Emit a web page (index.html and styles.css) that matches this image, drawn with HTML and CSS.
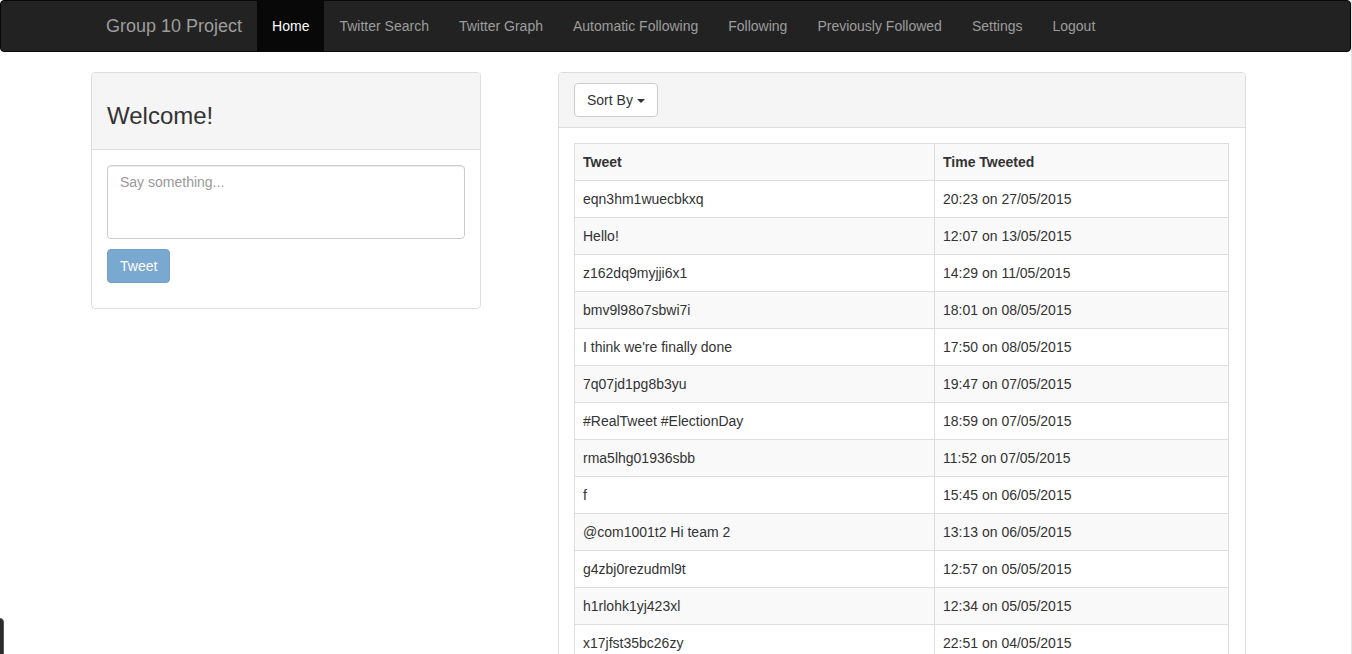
FILE: index.html
```html
<!DOCTYPE html>
<html lang="en">
<head>
<meta charset="utf-8">
<title>Group 10 Project</title>
<link rel="stylesheet" href="styles.css">
</head>
<body>
<div class="page">
  <nav class="navbar">
    <div class="nav-inner">
      <a class="brand" href="#">Group 10 Project</a>
      <ul class="nav">
        <li class="active"><a href="#">Home</a></li>
        <li><a href="#">Twitter Search</a></li>
        <li><a href="#">Twitter Graph</a></li>
        <li><a href="#">Automatic Following</a></li>
        <li><a href="#">Following</a></li>
        <li><a href="#">Previously Followed</a></li>
        <li><a href="#">Settings</a></li>
        <li><a href="#">Logout</a></li>
      </ul>
    </div>
  </nav>

  <div class="container main">
    <div class="panel panel-left">
      <div class="panel-heading">
        <h3 class="welcome">Welcome!</h3>
      </div>
      <div class="panel-body left-body">
        <textarea class="form-control" rows="3" placeholder="Say something..."></textarea>
        <button class="btn btn-primary" disabled>Tweet</button>
      </div>
    </div>

    <div class="panel panel-right">
      <div class="panel-heading">
        <button class="btn btn-default">Sort By <span class="caret"></span></button>
      </div>
      <div class="panel-body">
        <table class="table">
          <tbody>
            <tr><th class="col-tweet">Tweet</th><th>Time Tweeted</th></tr>
            <tr><td>eqn3hm1wuecbkxq</td><td>20:23 on 27/05/2015</td></tr>
            <tr><td>Hello!</td><td>12:07 on 13/05/2015</td></tr>
            <tr><td>z162dq9myjji6x1</td><td>14:29 on 11/05/2015</td></tr>
            <tr><td>bmv9l98o7sbwi7i</td><td>18:01 on 08/05/2015</td></tr>
            <tr><td>I think we're finally done</td><td>17:50 on 08/05/2015</td></tr>
            <tr><td>7q07jd1pg8b3yu</td><td>19:47 on 07/05/2015</td></tr>
            <tr><td>#RealTweet #ElectionDay</td><td>18:59 on 07/05/2015</td></tr>
            <tr><td>rma5lhg01936sbb</td><td>11:52 on 07/05/2015</td></tr>
            <tr><td>f</td><td>15:45 on 06/05/2015</td></tr>
            <tr><td>@com1001t2 Hi team 2</td><td>13:13 on 06/05/2015</td></tr>
            <tr><td>g4zbj0rezudml9t</td><td>12:57 on 05/05/2015</td></tr>
            <tr><td>h1rlohk1yj423xl</td><td>12:34 on 05/05/2015</td></tr>
            <tr><td>x17jfst35bc26zy</td><td>22:51 on 04/05/2015</td></tr>
          </tbody>
        </table>
      </div>
    </div>
  </div>
</div>
<div class="side-tab"></div>
</body>
</html>
```

FILE: styles.css
```css
* {
  box-sizing: border-box;
}

html, body {
  margin: 0;
  padding: 0;
  background: #fff;
}

body {
  font-family: "Liberation Sans", Arial, Helvetica, sans-serif;
  font-size: 14px;
  line-height: 20px;
  color: #333;
}

.page {
  width: 1352px;
  min-height: 654px;
  border-right: 1px solid #e3e3e3;
}

.navbar {
  width: 1351px;
  height: 52px;
  background: #222;
  border: 1px solid #080808;
  border-radius: 4px;
  margin-bottom: 20px;
}

.container {
  width: 1170px;
  margin-left: 91px;
}

.nav-inner {
  display: flex;
  height: 50px;
  margin-left: 90px;
}

.brand {
  display: block;
  padding: 15px;
  height: 50px;
  font-size: 18px;
  line-height: 20px;
  color: #9d9d9d;
  text-decoration: none;
}

.nav {
  display: flex;
  list-style: none;
  margin: 0;
  padding: 0;
}

.nav a {
  display: block;
  padding: 15px;
  height: 50px;
  line-height: 20px;
  color: #9d9d9d;
  text-decoration: none;
}

.nav .active a {
  background: #080808;
  color: #fff;
}

.main {
  display: flex;
  align-items: flex-start;
  gap: 77px;
}

.panel {
  background: #fff;
  border: 1px solid #ddd;
  border-radius: 4px;
  margin-bottom: 20px;
}

.panel-left {
  width: 390px;
}

.panel-right {
  width: 688px;
}

.panel-heading {
  background: #f5f5f5;
  border-bottom: 1px solid #ddd;
  padding: 10px 15px;
  border-radius: 3px 3px 0 0;
}

.panel-right .panel-heading {
  height: 55px;
}

.welcome {
  margin: 20px 0 10px;
  font-size: 24px;
  font-weight: 500;
  line-height: 26.4px;
  color: #333;
}

.panel-body {
  padding: 15px;
}

.left-body {
  padding-bottom: 25px;
}

.form-control {
  display: block;
  width: 358px;
  height: 74px;
  padding: 6px 12px;
  font-family: inherit;
  font-size: 14px;
  line-height: 20px;
  color: #555;
  border: 1px solid #ccc;
  border-radius: 4px;
  box-shadow: inset 0 1px 1px rgba(0, 0, 0, 0.075);
  resize: none;
  margin: 0;
}

.form-control::placeholder {
  color: #999;
}

.btn {
  display: inline-block;
  height: 34px;
  padding: 6px 12px;
  font-family: inherit;
  font-size: 14px;
  line-height: 20px;
  border: 1px solid transparent;
  border-radius: 4px;
  cursor: pointer;
}

.btn-primary {
  margin-top: 10px;
  color: #fff;
  background: #337ab7;
  border-color: #2e6da4;
  opacity: 0.65;
}

.btn-default {
  color: #333;
  background: #fff;
  border-color: #ccc;
}

.caret {
  display: inline-block;
  width: 0;
  height: 0;
  margin-left: 0;
  vertical-align: middle;
  border-top: 4px solid #333;
  border-left: 4px solid transparent;
  border-right: 4px solid transparent;
}

.table {
  width: 655px;
  border-collapse: collapse;
  border: 1px solid #ddd;
}

.table th,
.table td {
  padding: 8px;
  line-height: 20px;
  border: 1px solid #ddd;
  text-align: left;
  vertical-align: top;
}

.table th {
  font-weight: bold;
}

.col-tweet {
  width: 360px;
}

.table tr:nth-of-type(odd) {
  background: #f9f9f9;
}

.side-tab {
  position: fixed;
  left: -20px;
  top: 618px;
  width: 24px;
  height: 50px;
  background: #2b2b2b;
  border: 1px solid #555;
  border-radius: 4px;
}
```
